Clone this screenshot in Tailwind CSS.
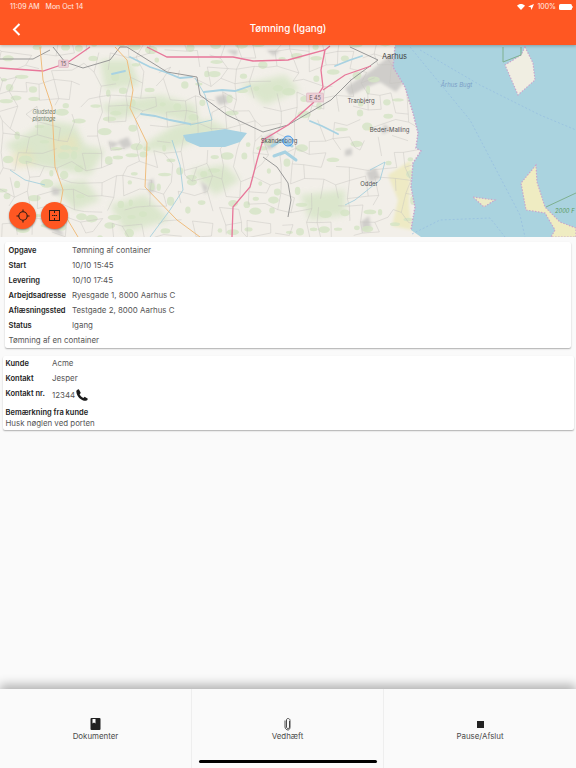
<!DOCTYPE html>
<html lang="en">
<head>
  <meta charset="UTF-8" />
  <meta name="viewport" content="width=device-width, initial-scale=1.0" />
  <title>Tømning (Igang)</title>
  <script src="https://cdn.jsdelivr.net/npm/@tailwindcss/browser@4"></script>
</head>
<body class="bg-[#fafafa] font-['Inter',sans-serif] antialiased">
<div class="w-[576px] h-[768px] flex flex-col overflow-hidden relative">

  <!-- Header -->
  <header class="h-[45px] shrink-0 bg-[#ff5722] text-white relative z-10 shadow-[0_1px_3px_rgba(0,0,0,0.25)]">
    <div class="h-[14px] flex items-center justify-between pl-[10px] pr-[3px] text-[7px] text-white/90">
      <div class="flex gap-[6px]"><span>11:09 AM</span><span>Mon Oct 14</span></div>
      <div class="flex items-center gap-[3px]">
        <svg class="w-[8px] h-[6px]" viewBox="0 0 16 12" fill="white"><path d="M8 12 0 3.500C4.500-.9 11.500-.9 16 3.500z"/></svg>
        <svg class="w-[6px] h-[6px]" viewBox="0 0 12 12" fill="white"><path d="M12 0 7 12 5.500 6.500 0 5z"/></svg>
        <span>100%</span>
        <span class="flex items-center"><span class="w-[13px] h-[6px] rounded-[1.500px] bg-white"></span><span class="w-[1px] h-[2px] bg-white/60"></span></span>
      </div>
    </div>
    <div class="h-[31px] flex items-center justify-center relative">
      <svg class="absolute left-[12px] top-[9px] w-[9px] h-[13px]" viewBox="0 0 9 13" fill="none" stroke="white" stroke-width="2"><path d="M7.500 1 2 6.500 7.500 12"/></svg>
      <span class="text-[9.800px] font-medium">Tømning (Igang)</span>
    </div>
  </header>

  <!-- Map -->
  <div class="h-[192px] shrink-0 bg-[#f2efe9] relative overflow-hidden">
    <svg class="w-[576px] h-[192px] block" viewBox="0 45 576 192" fill="none">
      <defs>
        <filter id="soft"><feGaussianBlur stdDeviation="0.450"/></filter>
        <filter id="mid"><feGaussianBlur stdDeviation="1.500"/></filter>
        <filter id="softer"><feGaussianBlur stdDeviation="3"/></filter>
      </defs>
      <!-- woods -->
      <g fill="#cfe2bd" opacity="0.65" filter="url(#softer)">
        <path d="M5 145 30 132 45 120 75 125 85 145 105 150 90 175 60 170 30 165z"/>
        <path d="M100 105 130 100 160 95 195 105 200 125 170 118 140 112 115 120z"/>
        <path d="M135 150 175 125 210 120 230 130 205 138 170 150z"/>
        <path d="M50 185 85 180 100 200 75 210z"/>
        <path d="M110 205 145 195 170 220 125 232z"/>
        <path d="M190 170 225 165 240 180 215 195z"/>
        <path d="M240 85 285 75 300 90 265 105z"/>
        <path d="M300 195 345 190 345 215 310 220z"/>
        <path d="M100 60 130 60 140 85 105 90z"/>
      </g>
      <g fill="#e9e3b8" opacity="0.6" filter="url(#softer)">
        <path d="M10 155 30 148 35 165 15 168z"/>
        <path d="M50 140 75 135 80 150 55 155z"/>
      </g>
      <path fill="#eeeac4" filter="url(#mid)" d="M388 175 411 160 409 205 412 230 392 226 398 200z"/>
      <!-- towns -->
      <g fill="#cfcdca" filter="url(#mid)">
        <path d="M345 88 372 70 392 54 396 66 404 82 396 92 380 82 365 88 350 96z"/>
        <path d="M118 141 128 137 132 146 123 149zM52 232 60 228 64 236zM120 143 108 141 111 149z"/>
        <path d="M148 183 153 178 155 190 149 194zM201 181 208 187 205 195zM215 97 226 94 229 103 219 105z"/>
        <path d="M263 138 272 133 276 146 268 150zM366 172 376 168 380 178 370 182z"/>
        <path d="M361 222 369 216 371 228 363 232zM52 187 60 189 59 195 52 195zM392 130 384 124 382 134z"/>
        <path d="M226 50 238 50 236 56zM266 50 280 50 274 56zM345 150 352 148 352 155 345 156z"/>
      </g>
      <!-- mesh of small roads and fields, filled in by the script below -->
      <g id="fields" fill="#d5e5c5" opacity="0.8" filter="url(#soft)"></g>
      <g id="roads" stroke="#c4c2be" stroke-width="0.450" filter="url(#soft)"></g>
      <!-- sea and islands -->
      <path fill="#aad3df" d="M395 45 393 67 405 87 413 113 418 133 416 148 421 151 413 163 411 187 415 207 411 230 421 237H576V45z"/>
      <g stroke="#c8a6cc" stroke-width="1.200" stroke-dasharray="1.500 1.500" filter="url(#soft)">
        <path fill="#f0eee2" d="M525 47 533 63 535 80 518 95 505 65 521 55z"/>
        <path fill="#ecebc8" d="M473 197 495 200 484 207z"/>
        <path fill="#efecc2" d="M536 165 521 183 526 210 545 213 555 230 551 237H576V228L560 222 545 207 537 182z"/>
      </g>
      <path stroke="#c8a6cc" stroke-width="1.500" stroke-dasharray="1.500 1.500" d="M395 47 393 67 405 87 413 113 418 133 416 148 421 151 413 163 411 187 415 207 411 230"/>
      <path stroke="#7fb08f" stroke-width="1" d="M503 47V62L521 55V47M546 207 576 193"/>
      <g stroke="#90b8e0" stroke-width="0.600" stroke-dasharray="2 2" filter="url(#soft)">
        <path d="M410 47 470 120 520 215 525 237"/>
        <path d="M420 50 480 85 540 115 576 130"/>
        <path d="M412 234 440 220 490 218 505 237"/>
      </g>
      <!-- lakes and streams -->
      <path fill="#a8d2e2" filter="url(#soft)" d="M183 135 205 132 225 129 247 133 240 142 225 147 200 147 186 141z"/>
      <g stroke="#a8d2e2" stroke-width="1.800" stroke-linecap="round" filter="url(#soft)">
        <path d="M112 74 125 71M130 57 150 67 165 72 180 78 192 77"/>
        <path d="M204 92 222 90 235 91 250 86"/>
        <path d="M141 114 155 116 170 120 190 124"/>
        <path d="M310 121 322 126 338 134"/>
        <path d="M335 66 350 60 362 56"/>
        <path d="M272 146 282 140 292 146M274 156 285 152 296 160" stroke-width="3"/>
      </g>
      <g stroke="#9ccbdc" stroke-width="0.800" filter="url(#soft)">
        <path d="M172 140 180 165 183 190 170 210 150 237"/>
        <path d="M195 78 205 95 212 120 190 125"/>
        <path d="M10 170 25 180 45 185"/>
        <path d="M370 170 385 162 380 180 355 200 345 205"/>
      </g>
      <!-- railway -->
      <g stroke="#8e8e8e" stroke-width="0.900" filter="url(#soft)">
        <path d="M0 59H33L50 50M53 47 65 62 83 68 110 60 120 47 127 47 167 72 197 77 200 95 227 115 263 132 288 125 331 100 351 80 378 60 350 47"/>
        <path d="M263 157 277 167 288 183 291 200 288 217"/>
      </g>
      <!-- motorways -->
      <g stroke="#e8779a" stroke-width="1.300" filter="url(#soft)">
        <path d="M0 68 43 71 67 63 90 47"/>
        <path d="M147 47 167 57 233 57 253 61 288 60 325 50 330 46"/>
        <path d="M325 50 321 70 323 87 313 103 288 125 263 140 258 157 250 187 233 207 232 237"/>
        <path d="M323 90 345 75 371 66"/>
      </g>
      <g stroke="#efbd7e" stroke-width="1" filter="url(#soft)">
        <path d="M40 47 43 80 52 107 55 167 63 190 60 207 78 237"/>
        <path d="M115 47 127 60 133 90 130 108 147 143 145 187 177 220 200 237"/>
      </g>
      <!-- labels -->
      <g font-family="Inter, sans-serif" text-anchor="middle">
        <rect x="58.500" y="60" width="10" height="7.500" rx="1" fill="#eccfd6" stroke="#d9aab8" stroke-width="0.500"/>
        <text x="63.500" y="66" font-size="5.500" fill="#6a5a5e">15</text>
        <rect x="306.500" y="93" width="17" height="9" rx="1" fill="#eccfd6" stroke="#d9aab8" stroke-width="0.500"/>
        <text x="315" y="100" font-size="5.500" fill="#6a5a5e">E 45</text>
        <text x="394.500" y="59" font-size="7.500" fill="#444">Aarhus</text>
        <text x="361" y="103" font-size="6" fill="#555">Tranbjerg</text>
        <text x="389.500" y="132" font-size="6" fill="#555">Beder-Malling</text>
        <text x="369" y="186" font-size="6" fill="#555">Odder</text>
        <text x="279" y="143" font-size="6" fill="#555">Skanderborg</text>
        <text x="456.500" y="87" font-size="6" fill="#7b9fc7" font-style="italic">Århus Bugt</text>
        <text x="44" y="114" font-size="5.500" fill="#6f7d6a" font-style="italic">Gludsted</text>
        <text x="44" y="121" font-size="5.500" fill="#6f7d6a" font-style="italic">plantage</text>
        <text x="555" y="213" font-size="5.800" fill="#5c9b62" font-style="italic" text-anchor="start">2000 F</text>
      </g>
      <circle cx="288" cy="141" r="5" fill="#3d97ee" fill-opacity="0.2" stroke="#3d97ee" stroke-width="1"/>
    </svg>

    <!-- Map buttons -->
    <div class="absolute left-[9px] top-[157px] flex gap-[5px]">
      <button class="w-[27px] h-[27px] rounded-full bg-[#ff5722] shadow-[0_1px_2px_rgba(0,0,0,0.4)] flex items-center justify-center">
        <svg class="w-[14px] h-[14px]" viewBox="0 0 14 14" fill="none" stroke="#2a1a14" stroke-width="1.100"><circle cx="7" cy="7" r="4.200"/><path d="M7 0.500V2.800M7 11.200V13.500M0.500 7H2.800M11.200 7H13.500"/></svg>
      </button>
      <button class="w-[27px] h-[27px] rounded-full bg-[#ff5722] shadow-[0_1px_2px_rgba(0,0,0,0.4)] flex items-center justify-center">
        <svg class="w-[11px] h-[11px]" viewBox="0 0 11 11" fill="none" stroke="#2a1a14" stroke-width="1"><rect x="0.500" y="0.500" width="10" height="10"/><path d="M5.500 1V3M5.500 5V6M5.500 8V10M3 5.500H4.500M6.500 5.500H8"/></svg>
      </button>
    </div>
  </div>

  <!-- Details -->
  <main class="flex-1 text-[7.900px] leading-[15px] text-[#555555]">
    <section class="mt-[5px] ml-[5px] w-[566px] h-[106px] bg-white rounded-[2px] shadow-[0_1px_1.500px_rgba(0,0,0,0.3)] px-[3.500px] pt-[0.500px]">
      <dl class="grid grid-cols-[63.500px_1fr]">
        <dt class="font-semibold text-[7.500px] text-[#222]">Opgave</dt><dd>Tømning af container</dd>
        <dt class="font-semibold text-[7.500px] text-[#222]">Start</dt><dd>10/10 15:45</dd>
        <dt class="font-semibold text-[7.500px] text-[#222]">Levering</dt><dd>10/10 17:45</dd>
        <dt class="font-semibold text-[7.500px] text-[#222]">Arbejdsadresse</dt><dd>Ryesgade 1, 8000 Aarhus C</dd>
        <dt class="font-semibold text-[7.500px] text-[#222]">Aflæsningssted</dt><dd>Testgade 2, 8000 Aarhus C</dd>
        <dt class="font-semibold text-[7.500px] text-[#222]">Status</dt><dd>Igang</dd>
      </dl>
      <p>Tømning af en container</p>
    </section>

    <section class="mt-[8px] ml-[3px] w-[571px] h-[74px] bg-white rounded-[2px] shadow-[0_1px_1.500px_rgba(0,0,0,0.3)] px-[2.500px]">
      <dl class="grid grid-cols-[46.500px_1fr]">
        <dt class="font-semibold text-[7.500px] text-[#222]">Kunde</dt><dd>Acme</dd>
        <dt class="font-semibold text-[7.500px] text-[#222]">Kontakt</dt><dd>Jesper</dd>
        <dt class="font-semibold text-[7.500px] text-[#222]">Kontakt nr.</dt>
        <dd class="flex items-center h-[18px]">
          <span class="mt-[1px]">12344</span>
          <svg class="w-[14px] h-[14px]" viewBox="0 0 24 24" fill="#1c1c1c"><path d="M6.600 2 10 8.500 7.900 10.600C9.400 13.600 11.400 15.600 14.400 17L16.500 15 22 18.400C21.600 20.200 20.400 21.800 18.600 22 9.500 21.400 3 14.500 2.200 5.400 2.400 3.800 4.400 2.200 6.600 2Z"/></svg>
        </dd>
      </dl>
      <div class="mt-[3.500px] leading-[10px]">
        <p class="font-semibold text-[7.500px] text-[#222]">Bemærkning fra kunde</p>
        <p>Husk nøglen ved porten</p>
      </div>
    </section>
  </main>

  <!-- Bottom bar -->
  <nav class="h-[79px] shrink-0 bg-[#fafafa] grid grid-cols-3 relative shadow-[0_-4px_10px_rgba(0,0,0,0.3)] text-[7.900px] leading-[10px] text-[#4a4a4a]">
    <button class="flex flex-col items-center pt-[29px] gap-[1px] border-r border-[#eeeeee]">
      <svg class="w-[11px] h-[12px]" viewBox="0 0 11 12"><path fill="#222" d="M1.500 0H9.500Q10.500 0 10.500 1V11Q10.500 12 9.500 12H1.500Q0.500 12 0.500 11V1Q0.500 0 1.500 0Z"/><path fill="#fff" d="M2.500 1H5.500V5.500L4 4.500 2.500 5.500Z"/></svg>
      <span>Dokumenter</span>
    </button>
    <button class="flex flex-col items-center pt-[28px] gap-[0px] border-r border-[#eeeeee]">
      <svg class="w-[8px] h-[14px]" viewBox="0 0 8 13" fill="none" stroke="#3a3a3a" stroke-width="0.900"><path d="M5.500 3.500V9.500C5.500 10.500 4.800 11 4 11S2.500 10.500 2.500 9.500V2.500C2.500 1.500 3.200 1 4 1S6 1.500 6 3V9.500C6 11.500 5 12.500 4 12.500S1 11.500 1 9.500V3"/></svg>
      <span>Vedhæft</span>
    </button>
    <button class="flex flex-col items-center pt-[29px] gap-[1px]">
      <span class="h-[12px] flex items-center"><span class="block w-[7px] h-[7px] bg-[#222]"></span></span>
      <span>Pause/Afslut</span>
    </button>
    <div class="absolute left-[199px] top-[71px] w-[178px] h-[3px] rounded-full bg-black"></div>
  </nav>
</div>

<script>
  // small deterministic generator so the map gets its fine road texture
  let seed = 7;
  function rnd() {
    seed = (seed * 16807) % 2147483647;
    return seed / 2147483647;
  }

  const svgNs = 'http://www.w3.org/2000/svg';
  const roads = document.getElementById('roads');
  const fields = document.getElementById('fields');
  const step = 14;
  const points = [];

  for (let row = 0; row * step < 210; row++) {
    points.push([]);
    for (let col = 0; col * step < 430; col++) {
      points[row].push([col * step + rnd() * 10 - 5, 40 + row * step + rnd() * 10 - 5]);
    }
  }

  let d = '';
  points.forEach((line, row) => {
    line.forEach((p, col) => {
      if (line[col + 1] && rnd() < 0.6) d += `M${p[0]} ${p[1]}L${line[col + 1][0]} ${line[col + 1][1]}`;
      if (points[row + 1] && rnd() < 0.6) d += `M${p[0]} ${p[1]}L${points[row + 1][col][0]} ${points[row + 1][col][1]}`;
      if (rnd() < 0.4) {
        const blob = document.createElementNS(svgNs, 'ellipse');
        blob.setAttribute('cx', p[0] + 7);
        blob.setAttribute('cy', p[1] + 7);
        blob.setAttribute('rx', 2 + rnd() * 5);
        blob.setAttribute('ry', 1.5 + rnd() * 3);
        fields.appendChild(blob);
      }
    });
  });

  const mesh = document.createElementNS(svgNs, 'path');
  mesh.setAttribute('d', d);
  roads.appendChild(mesh);
</script>
</body>
</html>
